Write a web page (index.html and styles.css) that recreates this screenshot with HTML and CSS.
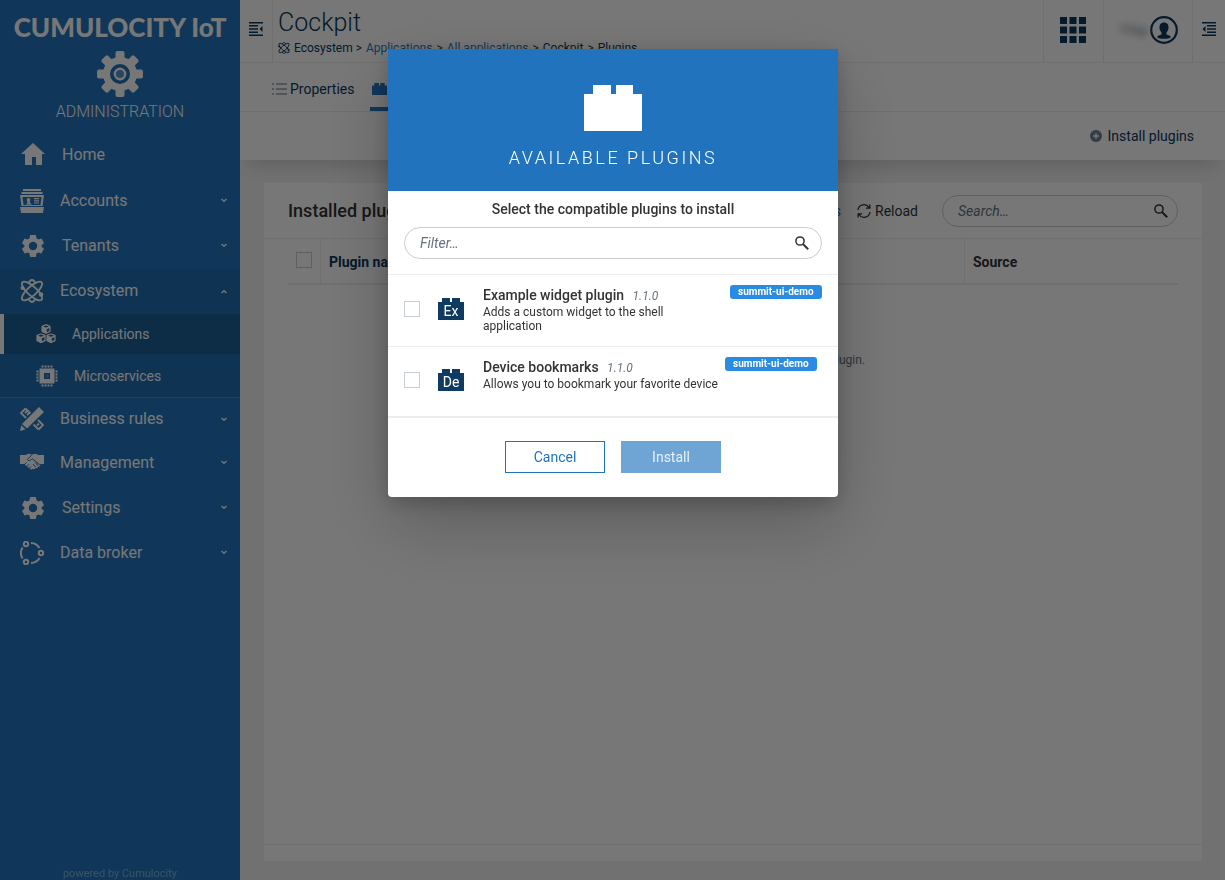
FILE: index.html
```html
<!DOCTYPE html>
<html lang="en">
<head>
<meta charset="utf-8">
<title>Cockpit - Administration</title>
<link rel="stylesheet" href="styles.css">
</head>
<body>
<svg class="defs" aria-hidden="true">
  <symbol id="i-cog" viewBox="0 0 24 24"><path fill-rule="evenodd" d="M9.2 1h5.6l.7 3.3 1.9 1.1 3.2-1 2.4 4.8-2.4 2v1.6l2.4 2-2.6 4.8-3.2-1-1.7 1-.7 3.4H9.2l-.7-3.4-1.7-1-3.2 1L1 14.8l2.4-2v-1.6L1 9.2l2.4-4.8 3.2 1 1.9-1.1zM12 7.8a4.2 4.2 0 1 0 0 8.400 4.200 4.200 0 0 0 0-8.400z"/></symbol>
  <symbol id="i-atom" viewBox="0 0 24 24"><g fill="none" stroke="currentColor" stroke-width="1.800"><ellipse cx="12" cy="12" rx="13" ry="4.600" transform="rotate(42 12 12)"/><ellipse cx="12" cy="12" rx="13" ry="4.600" transform="rotate(-42 12 12)"/><path d="M8.500 4.500C9.500 2 10.500 1 12 1s2.500 1 3.500 3.500M8.500 19.500C9.500 22 10.500 23 12 23s2.500-1 3.500-3.500"/></g><circle cx="2.500" cy="9" r="2"/><circle cx="21" cy="15.500" r="2.200"/></symbol>
  <symbol id="i-brick" viewBox="0 0 58 46"><path d="M0 9h9V0h18v9h5V0h17v9h9v37H0z"/></symbol>
  <symbol id="i-search" viewBox="0 0 14 14"><g fill="none" stroke="currentColor"><circle cx="5" cy="5" r="4.100" stroke-width="1.500"/><path d="M8.200 8.200l5 5" stroke-width="2"/></g></symbol>
  <symbol id="i-down" viewBox="0 0 8 5"><path d="M1.500 1l2.500 2.300L6.500 1" fill="none" stroke="currentColor" stroke-width="1.300"/></symbol>
  <symbol id="i-cube" viewBox="0 0 12 12"><path d="M6 0l5.500 2.300v7L6 12 .5 9.300v-7z"/><path d="M2.500 3L6 4.300 9.500 3 6 1.700zM7 6.200l3-1.300v3.400L7 9.800z" class="cut"/></symbol>
</svg>

<div class="app">
  <aside class="sidebar">
    <div class="brand">CUMULOCITY IoT</div>
    <div class="app-title">
      <svg class="app-gear" viewBox="0 0 46 46"><g><rect x="18.500" y="0" width="9" height="46" rx="2"/><rect x="18.500" y="0" width="9" height="46" rx="2" transform="rotate(45 23 23)"/><rect x="18.500" y="0" width="9" height="46" rx="2" transform="rotate(90 23 23)"/><rect x="18.500" y="0" width="9" height="46" rx="2" transform="rotate(135 23 23)"/></g><circle cx="23" cy="23" r="17"/><circle cx="23" cy="23" r="10" fill="#2273bd"/><circle cx="23" cy="23" r="5.200" fill="#5f92c5" stroke="#fff" stroke-width="2.400"/></svg>
      <span>ADMINISTRATION</span>
    </div>
    <nav class="nav">
      <a href="#" class="nav-item narrow home"><svg class="ico" viewBox="0 0 24 24"><path d="M12 0l12 11h-3v11h-6v-8h-4v8H4V11H0z"/></svg><span>Home</span></a>
      <a href="#" class="nav-item"><svg class="ico" viewBox="0 0 24 24"><path d="M3 0h18v2H3zM1.500 3h21v2h-21z"/><path fill-rule="evenodd" d="M0 6h24l-1.500 11H1.500zM2.500 8l1 8h17l1-8zM0 18h24l-1 6H1z"/><path d="M8.500 9a2 2 0 0 1 1.500 3l-.3 1.200L12 15.500H6l1.700-2.300L7 12a2 2 0 0 1 1.500-3zM14 9h5v1.200h-5zM14 11.200h5v1.200h-5zM14 13.400h5v1.200h-5z"/></svg><span>Accounts</span><svg class="chev"><use href="#i-down"/></svg></a>
      <a href="#" class="nav-item narrow"><svg class="ico"><use href="#i-cog"/></svg><span>Tenants</span><svg class="chev"><use href="#i-down"/></svg></a>
      <div class="nav-group">
        <a href="#" class="nav-item"><svg class="ico"><use href="#i-atom"/></svg><span>Ecosystem</span><svg class="chev up"><use href="#i-down"/></svg></a>
        <a href="#" class="sub-item active"><svg class="ico-s" viewBox="0 0 24 24"><use href="#i-cube" x="6" y="0" width="12" height="12"/><use href="#i-cube" x="0" y="11" width="12" height="12"/><use href="#i-cube" x="12" y="11" width="12" height="12"/></svg><span>Applications</span></a>
        <a href="#" class="sub-item chip"><svg class="ico-s" viewBox="0 0 22 22"><path fill-rule="evenodd" d="M3.500 3.500h15v15h-15zM8 8v6h6V8z"/><path d="M9.500 9.500h3v3h-3z" opacity=".2"/><path d="M5.500 1.500h11M5.500 20.500h11M1.500 5.500v11M20.500 5.500v11" fill="none" stroke="currentColor" stroke-width="2" stroke-dasharray="2 1"/></svg><span>Microservices</span></a>
      </div>
      <a href="#" class="nav-item compact"><svg class="ico" viewBox="0 0 24 24"><path d="M19 0l5 5L7 21.500 2 17zM1.300 18.300L5.500 22.500 0 24z"/><path d="M5.500 1.500L1 6l5 5M5.500 1.500l5 5M5 6l2-2M7 8l2-2M18.500 22.500L23 18l-5-5M18.500 22.500l-5-5M17 18.500l2-2" fill="none" stroke="currentColor" stroke-width="1.800"/></svg><span>Business rules</span><svg class="chev"><use href="#i-down"/></svg></a>
      <a href="#" class="nav-item"><svg class="ico" viewBox="0 0 24 24"><path d="M0 4h5.500l3-1.200L12 3.500l3-.7L19 4h5v9h-3l-1 .5c.3 1.500-.8 2.400-2 2.200 0 1.100-1.200 1.900-2.500 1.400-.2 1.200-1.700 1.600-3 .7-.3.900-1.300 1-2 .5L4 13H0z"/><path d="M12 3.800L7.300 8.500c1 1.800 3 1.200 5-.7l7.500 5.900M4 14l2.500-2.500M6.300 16l2.700-2.700M8.600 18l2.600-2.600M13 13l2.800 3.300M15.300 11.500l3 3.500" fill="none" stroke="#2477bf" stroke-width="1"/></svg><span>Management</span><svg class="chev"><use href="#i-down"/></svg></a>
      <a href="#" class="nav-item narrow"><svg class="ico"><use href="#i-cog"/></svg><span>Settings</span><svg class="chev"><use href="#i-down"/></svg></a>
      <a href="#" class="nav-item"><svg class="ico" viewBox="0 0 24 24"><g fill="none" stroke="currentColor" stroke-width="2"><circle cx="6" cy="3" r="2.200"/><circle cx="21" cy="12" r="2.200"/><circle cx="6" cy="21" r="2.200"/><path d="M11 1.900a10.500 10.500 0 0 1 8.500 5M19.500 17a10.500 10.500 0 0 1-8.500 5.100M2.500 6.500a11 11 0 0 0 0 11"/></g></svg><span>Data broker</span><svg class="chev"><use href="#i-down"/></svg></a>
    </nav>
    <footer class="powered">powered by Cumulocity</footer>
  </aside>

  <main class="main">
    <div class="topbar">
      <header class="header">
        <button class="toggle" aria-label="Toggle navigator"><svg viewBox="0 0 14 14"><path d="M0 .7h14M0 3.800h9M0 7h9M0 10.200h9M0 13.300h14" fill="none" stroke="currentColor" stroke-width="1.400"/><path d="M13.500 4v6L10.500 7z"/></svg></button>
        <div class="heading">
          <h1>Cockpit</h1>
          <div class="crumbs"><svg><use href="#i-atom"/></svg><span>Ecosystem &gt;</span><a href="#">Applications</a><span>&gt;</span><a href="#">All applications</a><span>&gt;</span><span>Cockpit</span><span>&gt;</span><span>Plugins</span></div>
        </div>
        <button class="cell apps" aria-label="Applications"><svg viewBox="0 0 26 26"><path d="M0 0h7v7H0zM9.500 0h7v7h-7zM19 0h7v7h-7zM0 9.500h7v7H0zM9.500 9.500h7v7h-7zM19 9.500h7v7h-7zM0 19h7v7H0zM9.500 19h7v7h-7zM19 19h7v7h-7z"/></svg></button>
        <button class="cell user" aria-label="User"><i class="smudge"></i><svg viewBox="0 0 28 28"><circle cx="14" cy="14" r="12.800" fill="none" stroke="currentColor" stroke-width="2.200"/><path d="M14 6.500c3.500 0 4.500 2.500 4.500 5 0 2-.7 3.500-2 5v2c2 .8 4 1.200 4.500 2.700-3 2-11 2-14 0 .5-1.500 2.500-1.900 4.500-2.700v-2c-1.300-1.500-2-3-2-5 0-2.500 1-5 4.500-5z"/></svg></button>
        <button class="cell drawer" aria-label="Toggle drawer"><svg viewBox="0 0 14 14"><path d="M0 .7h14M5 3.800h9M5 7h9M5 10.200h9M0 13.300h14" fill="none" stroke="currentColor" stroke-width="1.400"/><path d="M3.500 4v6L.5 7z"/></svg></button>
      </header>
      <div class="tabs">
        <a href="#" class="tab"><svg viewBox="0 0 15 12"><path d="M4 1h11M4 6h11M4 11h11M0 1h2M0 6h2M0 11h2" fill="none" stroke="currentColor"/></svg>Properties</a>
        <a href="#" class="tab current"><svg viewBox="0 0 58 46"><use href="#i-brick"/></svg>Plugins</a>
      </div>
      <div class="actions"><button class="link-btn"><svg viewBox="0 0 12 12"><circle cx="6" cy="6" r="6"/><path d="M6 3v6M3 6h6" stroke="#fff" stroke-width="1.300"/></svg>Install plugins</button></div>
    </div>
    <section class="content">
      <div class="card">
        <div class="card-head">
          <h2>Installed plugins</h2>
          <button class="link-btn blue">Install plugins</button>
          <button class="link-btn dark"><svg viewBox="0 0 14 14"><path d="M1 6a6 6 0 0 1 11-2.500M13 8a6 6 0 0 1-11 2.500M12.800.5v3.700H9M1.200 13.500V9.800H5" fill="none" stroke="currentColor" stroke-width="1.300"/></svg>Reload</button>
          <label class="search"><input type="text" placeholder="Search…" aria-label="Search"><svg><use href="#i-search"/></svg></label>
        </div>
        <div class="table-wrap">
          <table>
            <thead><tr><th class="c-check"><input type="checkbox" aria-label="Select all"></th><th class="c-name">Plugin name</th><th>Source</th></tr></thead>
          </table>
        </div>
        <p class="empty">No plugins here to display. Install your first plugin.</p>
        <div class="card-foot"></div>
      </div>
    </section>
  </main>
</div>

<div class="backdrop">
  <div class="modal" role="dialog" aria-modal="true" aria-labelledby="modal-title">
    <div class="modal-head">
      <svg viewBox="0 0 58 46"><use href="#i-brick"/></svg>
      <h3 id="modal-title">AVAILABLE PLUGINS</h3>
    </div>
    <div class="modal-filter">
      <p>Select the compatible plugins to install</p>
      <label class="search"><input type="text" placeholder="Filter…" aria-label="Filter"><svg><use href="#i-search"/></svg></label>
    </div>
    <ul class="plugins">
      <li>
        <input type="checkbox" id="p1">
        <span class="brick"><svg viewBox="0 0 26 22"><path d="M0 4h4V0h8v4h2V0h8v4h4v18H0z"/></svg><b>Ex</b></span>
        <label for="p1" class="info"><span class="name">Example widget plugin <em>1.1.0</em></span><span class="desc">Adds a custom widget to the shell application</span></label>
        <span class="badge">summit-ui-demo</span>
      </li>
      <li>
        <input type="checkbox" id="p2">
        <span class="brick"><svg viewBox="0 0 26 22"><path d="M0 4h4V0h8v4h2V0h8v4h4v18H0z"/></svg><b>De</b></span>
        <label for="p2" class="info wide"><span class="name">Device bookmarks <em>1.1.0</em></span><span class="desc">Allows you to bookmark your favorite device</span></label>
        <span class="badge">summit-ui-demo</span>
      </li>
    </ul>
    <div class="modal-foot"><button class="btn">Cancel</button><button class="btn primary" disabled>Install</button></div>
  </div>
</div>
</body>
</html>
```

FILE: styles.css
```css
* { box-sizing: border-box; }
body { margin: 0; font: 14px/20px Roboto, sans-serif; color: #333; }
h1, h2, h3, p, ul { margin: 0; padding: 0; }
a { color: inherit; text-decoration: none; }
button { font: inherit; color: inherit; background: none; border: 0; padding: 0; }
svg { display: block; fill: currentColor; flex: none; }
.defs { position: absolute; width: 0; height: 0; }

.app { display: flex; height: 100vh; overflow: hidden; }

/* navigator */
.sidebar { width: 240px; flex: none; background: #2477bf; color: #fff; display: flex; flex-direction: column; }
.brand { font: 900 26px/32px Lato, sans-serif; text-align: center; padding-top: 11px; white-space: nowrap; }
.app-title { display: flex; flex-direction: column; align-items: center; padding-top: 8px; font-size: 16px; line-height: 24px; font-weight: 300; }
.app-gear { width: 46px; height: 46px; }
.app-title span { padding-top: 3px; }
.nav { padding-top: 8px; }
.nav-item { display: flex; align-items: center; height: 45px; padding: 0 20px; gap: 16px; font-size: 16px; }
.nav-item span { flex: 1; }
.ico { width: 24px; height: 24px; }
.nav-item.narrow { padding-left: 21px; gap: 17px; }
.nav-item.home { height: 46px; }
.nav-item.compact { height: 42px; }
.chev { width: 8px; height: 5px; margin-right: -8px; }
.chev.up { transform: rotate(180deg); }
.nav-group { margin-top: 1px; background: #2171b3; border-bottom: 1px solid #4d8ac2; }
.nav-group .nav-item { padding-bottom: 1px; }
.sub-item { display: flex; align-items: center; height: 40px; padding-left: 36px; gap: 16px; font-size: 14px; }
.ico-s { width: 20px; height: 20px; }
.cut { fill: #1d6098; }
.sub-item.active { background: #1d6098; border-left: 4px solid #fff; padding-left: 32px; }
.sub-item.chip { height: 43px; }
.chip .ico-s { width: 22px; height: 22px; }
.powered { margin-top: auto; text-align: center; font-size: 11px; line-height: 13px; opacity: .4; }

/* header */
.main { flex: 1; min-width: 0; display: flex; flex-direction: column; background: #f2f2f2; color: #0b385b; }
.topbar { background: #fff; box-shadow: 0 14px 16px -8px rgba(0, 0, 0, .14); }
.header { display: flex; height: 63px; border-bottom: 1px solid #ededed; }
.toggle { width: 33px; border-right: 1px solid #ededed; display: flex; justify-content: center; align-items: center; padding-bottom: 5px; }
.toggle svg, .drawer svg { width: 14px; height: 14px; }
.heading { flex: 1; padding: 8px 0 0 5px; }
h1 { font-size: 25px; line-height: 30px; font-weight: 300; }
.crumbs { display: flex; align-items: center; gap: 4px; font-size: 12px; line-height: 20px; white-space: nowrap; }
.crumbs svg { width: 12px; height: 12px; }
.crumbs a { color: #2477bf; }
.cell { border-left: 1px solid #ededed; display: flex; align-items: center; justify-content: center; }
.apps { width: 60px; padding: 0 2px 2px 0; }
.apps svg { width: 26px; height: 26px; }
.user { width: 89px; padding-bottom: 2px; gap: 2px; }
.user svg { width: 28px; height: 28px; }
.smudge { width: 30px; height: 10px; border-radius: 8px; background: linear-gradient(90deg, #e4e4e4, #c2c5ca); filter: blur(3px); transform: rotate(12deg); }
.drawer { width: 33px; padding-bottom: 4px; }
.tabs { display: flex; height: 49px; border-bottom: 1px solid #ededed; padding-left: 32px; gap: 16px; }
.tab { display: flex; align-items: center; gap: 3px; padding-top: 8px; border-bottom: 4px solid transparent; white-space: nowrap; }
.tab svg { width: 15px; height: 12px; opacity: .7; }
.tab.current { color: #2477bf; border-color: #2477bf; padding-left: 2px; }
.tab.current svg { opacity: 1; }
.actions { display: flex; justify-content: flex-end; height: 48px; padding-right: 31px; }
.link-btn { display: flex; align-items: center; gap: 6px; }
.actions .link-btn svg { width: 12px; height: 12px; fill: #6d8497; }
.link-btn.blue { color: #2477bf; }
.link-btn.dark { color: #333; margin-right: 8px; gap: 4px; }
.dark svg { width: 14px; height: 14px; }

/* grid card */
.content { flex: 1; display: flex; padding: 23px 23px 19px 24px; }
.card { flex: 1; display: flex; flex-direction: column; background: #fff; }
.card-head { display: flex; align-items: center; gap: 16px; height: 56px; padding: 0 24px; border-bottom: 1px solid #ededed; }
h2 { flex: 1; font-size: 18px; font-weight: 500; color: #333; }
.search { display: flex; align-items: center; width: 236px; height: 32px; border: 1px solid #c8cdd2; border-radius: 16px; padding: 0 9px 0 15px; color: #333; }
.search input { flex: 1; min-width: 0; border: 0; padding: 0; background: none; font: inherit; outline: 0; }
.search input::placeholder { color: #66727d; font-style: italic; opacity: 1; }
.search svg { width: 14px; height: 14px; }
.table-wrap { padding: 0 24px; }
table { width: 100%; table-layout: fixed; border-collapse: separate; border-spacing: 0; border-bottom: 2px solid #ededed; }
th { height: 44px; padding: 2px 8px 0; text-align: left; font-weight: 700; border-right: 1px solid #ededed; }
th:last-child { border: 0; color: #333; }
th.c-check { width: 33px; padding: 0 8px 2px; }
.c-name { width: 644px; }
input[type="checkbox"] { appearance: none; display: block; flex: none; margin: 0; width: 16px; height: 16px; border: 1px solid #c8cdd2; background: #fff; }
.empty { flex: 1; padding-top: 65px; text-align: center; font-size: 12px; color: #66727d; }
.card-foot { height: 17px; border-top: 1px solid #ededed; }

/* dialog */
.backdrop { position: fixed; inset: 0; padding: 49px 0 0 1px; background: rgba(0, 0, 0, .533); }
.modal { width: 450px; margin: 0 auto; background: #fff; border-radius: 0 0 4px 4px; overflow: hidden; box-shadow: 0 28px 72px rgba(0, 0, 0, .22), 0 6px 20px rgba(0, 0, 0, .2); }
.modal-head { background: #2273bd; color: #fff; display: flex; flex-direction: column; align-items: center; padding: 36px 0 22px; }
.modal-head svg { width: 58px; height: 46px; }
h3 { margin-top: 16px; font-size: 18px; line-height: 22px; font-weight: 300; letter-spacing: .14em; }
.modal-filter { padding: 8px 16px 15px; border-bottom: 1px solid #ededed; }
.modal-filter p { text-align: center; font-weight: 500; margin-bottom: 8px; }
.modal-filter .search { width: 100%; padding-right: 12px; }
.plugins { list-style: none; border-bottom: 2px solid #ededed; }
.plugins li { display: flex; align-items: center; height: 71px; padding: 0 16px 3px; }
.plugins li + li { height: 70px; padding-bottom: 4px; border-top: 1px solid #ededed; }
.brick { display: grid; place-items: center; margin: 0 19px 0 18px; color: #0f3b61; }
.brick > * { grid-area: 1 / 1; }
.brick svg { width: 26px; height: 22px; }
.brick b { color: #fff; font-weight: 400; line-height: 16px; padding-top: 4px; }
.info { align-self: flex-start; display: flex; flex-direction: column; width: 239px; padding: 11px 40px 0 0; }
.info.wide { width: 234px; padding-right: 0; }
.name { font-weight: 500; line-height: 18px; }
.name em { font-size: 12px; font-weight: 400; color: #66727d; margin-left: 5px; }
.desc { font-size: 12px; line-height: 14px; }
.wide .desc { white-space: nowrap; }
.badge { align-self: flex-start; margin: 10px 0 0 8px; padding: 0 8px; border-radius: 3px; background: #2a8be2; color: #fff; font-size: 10px; line-height: 14px; font-weight: 700; white-space: nowrap; }
.modal-foot { display: flex; justify-content: center; gap: 16px; padding: 23px 24px 24px; }
.btn { width: 100px; height: 32px; border: 1px solid #2273bd; color: #2273bd; }
.btn.primary { background: #6fa5d5; border-color: #6fa5d5; color: #e8f1f9; }
```
